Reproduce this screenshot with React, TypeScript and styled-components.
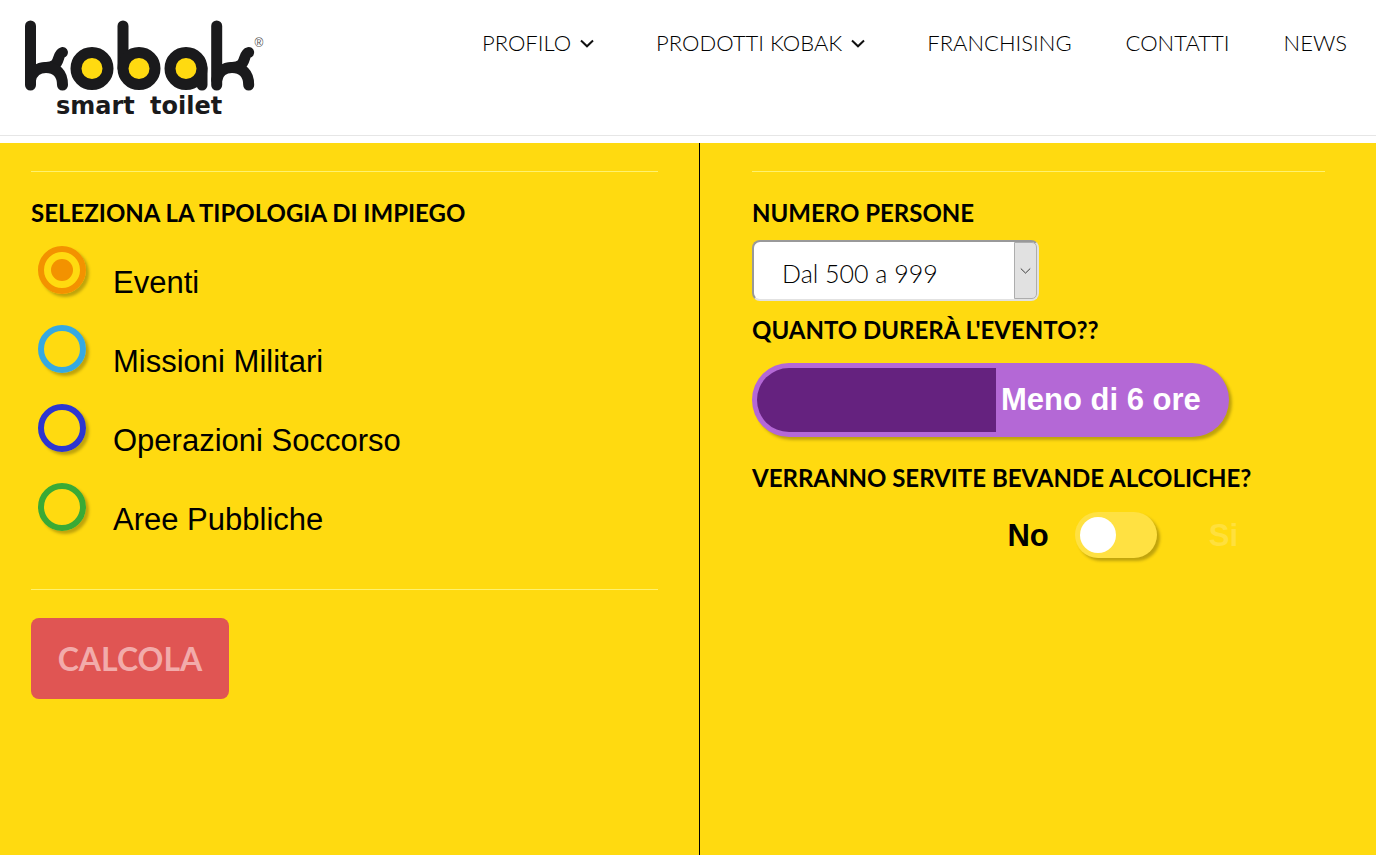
import React, { useState } from "react";
import styled, { createGlobalStyle } from "styled-components";

const GlobalStyle = createGlobalStyle`
  *, *::before, *::after { box-sizing: border-box; }
  body {
    margin: 0;
    background: #fff;
    color: #000;
    font-family: Lato, "Open Sans", sans-serif;
  }
  #root { min-height: 100vh; display: flex; flex-direction: column; }
`;

const Header = styled.header`
  display: flex;
  justify-content: space-between;
  align-items: flex-start;
  flex: none;
  padding: 14px 29px 15px 20px;
  margin-bottom: 7px;
  border-bottom: 1px solid #e6e6e6;
`;

const LogoLink = styled.a`
  display: block;
  line-height: 0;
`;

const Nav = styled.nav`
  display: flex;
  gap: 54px;
  margin-top: 14px;
`;

const NavLink = styled.a<{ $menu?: boolean }>`
  display: flex;
  align-items: center;
  gap: 9px;
  padding-right: ${(p) => (p.$menu ? "8px" : "0")};
  color: #000;
  font-size: 22px;
  font-weight: 300;
  line-height: 30px;
  text-decoration: none;
  white-space: nowrap;
`;

const Main = styled.main`
  flex: 1;
  display: grid;
  grid-template-columns: 700fr 676fr;
  background: #ffda10;
`;

const Column = styled.section<{ $divided?: boolean }>`
  min-width: 0;
  padding: 28px ${(p) => (p.$divided ? "41px 28px 31px" : "51px 28px 52px")};
  border-right: ${(p) => (p.$divided ? "1px solid #000" : "0")};
`;

const Rule = styled.hr`
  height: 1px;
  margin: 0;
  border: 0;
  background: #fff26e;
`;

const Group = styled.fieldset`
  margin: 0;
  padding: 26px 0 27px;
  border: 0;
  min-width: 0;
`;

const titleStyle = `
  display: block;
  padding: 0;
  font-size: 24px;
  font-weight: 700;
  line-height: 30px;
  white-space: nowrap;
`;

const Legend = styled.legend`
  ${titleStyle}
  float: left;
  width: 100%;
  margin-bottom: 18px;
`;

const Options = styled.div`
  clear: both;
`;

const FieldTitle = styled.label<{ $top: number; $bottom: number }>`
  ${titleStyle}
  margin: ${(p) => p.$top}px 0 ${(p) => p.$bottom}px;
`;

const Option = styled.label`
  display: flex;
  align-items: flex-start;
  gap: 27px;
  height: 79px;
  padding-left: 7px;
  font-family: "Liberation Sans", Arial, sans-serif;
  font-size: 31px;
  line-height: 36px;
`;

const OptionText = styled.span`
  padding-top: 19px;
`;

const Radio = styled.input<{ $color: string }>`
  appearance: none;
  flex: none;
  display: grid;
  place-items: center;
  width: 48px;
  height: 48px;
  margin: 0;
  border: 6px solid ${(p) => p.$color};
  border-radius: 50%;
  box-shadow: 3px 3px 3px rgba(0, 0, 0, 0.25);

  &:checked::before {
    content: "";
    width: 22px;
    height: 22px;
    border-radius: 50%;
    background: ${(p) => p.$color};
  }
`;

const Submit = styled.button`
  height: 81px;
  min-width: 198px;
  margin-top: 28px;
  padding: 0 26px;
  border: 0;
  border-radius: 8px;
  background: #e05553;
  color: #f2abaa;
  font-family: inherit;
  font-size: 32px;
  font-weight: 700;
`;

const SelectBox = styled.div`
  position: relative;
  width: 287px;
  height: 61px;
`;

const Select = styled.select`
  appearance: none;
  width: 100%;
  height: 100%;
  padding: 4px 40px 0 28px;
  border: 2px solid #999;
  border-right-color: #e2e2e2;
  border-bottom-color: #e2e2e2;
  border-radius: 8px;
  background: #fff;
  color: #000;
  font-family: inherit;
  font-size: 25px;
  font-weight: 300;
`;

const SelectArrow = styled.span`
  position: absolute;
  top: 2px;
  right: 2px;
  bottom: 2px;
  width: 23px;
  display: grid;
  place-items: center;
  border: 1px solid #adadad;
  border-radius: 0 5px 5px 0;
  background: #e1e1e1;
  pointer-events: none;
`;

const Duration = styled.label`
  display: flex;
  align-items: center;
  width: 477px;
  max-width: 100%;
  height: 74px;
  padding: 5px;
  border-radius: 37px;
  background: #b468d6;
  box-shadow: 3px 3px 3px rgba(0, 0, 0, 0.25);
  color: #fff;
  font-family: "Liberation Sans", Arial, sans-serif;
  font-size: 31px;
  font-weight: 700;
  white-space: nowrap;
`;

const DurationInput = styled.input`
  appearance: none;
  width: 239px;
  height: 64px;
  margin: 0 5px 0 0;
  border-radius: 32px 0 0 32px;
  background: #65227f;
`;

const Choice = styled.div`
  display: flex;
  align-items: center;
  justify-content: flex-end;
  padding-right: 87px;
  font-family: "Liberation Sans", Arial, sans-serif;
  font-size: 31px;
  font-weight: 700;
`;

const ChoiceText = styled.span<{ $active: boolean }>`
  padding-top: 2px;
  color: ${(p) => (p.$active ? "#000" : "#ffe03d")};
`;

const Switch = styled.input`
  appearance: none;
  display: flex;
  align-items: center;
  width: 82px;
  height: 46px;
  margin: 0 52px 0 26px;
  padding: 0 5px;
  border-radius: 23px;
  background: #ffe142;
  box-shadow: 3px 3px 3px rgba(0, 0, 0, 0.25);

  &::before {
    content: "";
    width: 36px;
    height: 36px;
    border-radius: 50%;
    background: #fff;
  }
  &:checked { justify-content: flex-end; }
`;

function Logo() {
  return (
    <svg width="250" height="106" viewBox="20 14 250 106" role="img" aria-label="kobak smart toilet">
      <g fill="none" stroke="#1a1a1c" strokeWidth="11" strokeLinecap="round" strokeLinejoin="round">
        <path d="M30.5 26V85" />
        <path d="M30.5 80C32 72 38 67.5 46 67.5C56 67.5 57.5 62 58.500 58.500C59.500 55 60.500 53 62.500 52.500" />
        <path d="M46 67.5C56 67.5 62.5 73 62.5 85" />
        <path d="M123 26V68" />
        <path d="M202 68V85" />
        <path d="M216.700 26V85" />
        <path d="M216.700 80C218 72 224 67.5 232 67.5C242 67.5 243.5 62 244.500 58.500C245.500 55 246.500 53 248.700 52.500" />
        <path d="M232 67.5C242 67.5 248.700 73 248.700 85" />
      </g>
      <g fill="#ffda10" stroke="#1a1a1c" strokeWidth="11">
        <circle cx="92" cy="68.500" r="16" />
        <circle cx="139" cy="68.500" r="16" />
        <circle cx="186" cy="68.500" r="16" />
      </g>
      <text x="259" y="47" textAnchor="middle" fontFamily="Liberation Sans, sans-serif" fontSize="12" fill="#555">®</text>
      <g fontFamily="DejaVu Sans, sans-serif" fontWeight="700" fontSize="24" fill="#1a1a1c">
        <text x="56" y="114">smart</text>
        <text x="150" y="114">toilet</text>
      </g>
    </svg>
  );
}

function Chevron({ size, weight }: { size: number; weight: number }) {
  return (
    <svg width={size} height={size} viewBox="0 0 14 14" fill="none" stroke="#111" strokeWidth={weight} aria-hidden="true">
      <path d="M1 4.500L7 10.300L13 4.500" />
    </svg>
  );
}

const links = [
  { text: "PROFILO", menu: true },
  { text: "PRODOTTI KOBAK", menu: true },
  { text: "FRANCHISING" },
  { text: "CONTATTI" },
  { text: "NEWS" },
];

const uses = [
  { text: "Eventi", color: "#f39200" },
  { text: "Missioni Militari", color: "#36a9e1" },
  { text: "Operazioni Soccorso", color: "#2d36d0" },
  { text: "Aree Pubbliche", color: "#3aaa35" },
];

export default function App() {
  const [use, setUse] = useState("Eventi");
  const [alcohol, setAlcohol] = useState(false);
  const [longEvent, setLongEvent] = useState(false);

  return (
    <>
      <GlobalStyle />
      <Header>
        <LogoLink href="#">
          <Logo />
        </LogoLink>
        <Nav>
          {links.map((l) => (
            <NavLink key={l.text} href="#" $menu={l.menu}>
              {l.text}
              {l.menu && <Chevron size={14} weight={2} />}
            </NavLink>
          ))}
        </Nav>
      </Header>
      <Main>
        <Column $divided>
          <Rule />
          <Group>
            <Legend>SELEZIONA LA TIPOLOGIA DI IMPIEGO</Legend>
            <Options>
              {uses.map((u) => (
                <Option key={u.text}>
                  <Radio
                    type="radio"
                    name="use"
                    $color={u.color}
                    checked={use === u.text}
                    onChange={() => setUse(u.text)}
                  />
                  <OptionText>{u.text}</OptionText>
                </Option>
              ))}
            </Options>
          </Group>
          <Rule />
          <Submit type="button">CALCOLA</Submit>
        </Column>
        <Column>
          <Rule />
          <FieldTitle htmlFor="people" $top={26} $bottom={12}>NUMERO PERSONE</FieldTitle>
          <SelectBox>
            <Select id="people" defaultValue="500">
              <option value="500">Dal 500 a 999</option>
            </Select>
            <SelectArrow>
              <Chevron size={11} weight={1} />
            </SelectArrow>
          </SelectBox>
          <FieldTitle htmlFor="duration" $top={14} $bottom={18}>QUANTO DURERÀ L'EVENTO??</FieldTitle>
          <Duration>
            <DurationInput
              id="duration"
              type="checkbox"
              checked={longEvent}
              onChange={(e) => setLongEvent(e.target.checked)}
            />
            Meno di 6 ore
          </Duration>
          <FieldTitle htmlFor="alcohol" $top={26} $bottom={19}>VERRANNO SERVITE BEVANDE ALCOLICHE?</FieldTitle>
          <Choice>
            <ChoiceText $active={!alcohol}>No</ChoiceText>
            <Switch
              id="alcohol"
              type="checkbox"
              checked={alcohol}
              onChange={(e) => setAlcohol(e.target.checked)}
            />
            <ChoiceText $active={alcohol}>Si</ChoiceText>
          </Choice>
        </Column>
      </Main>
    </>
  );
}
